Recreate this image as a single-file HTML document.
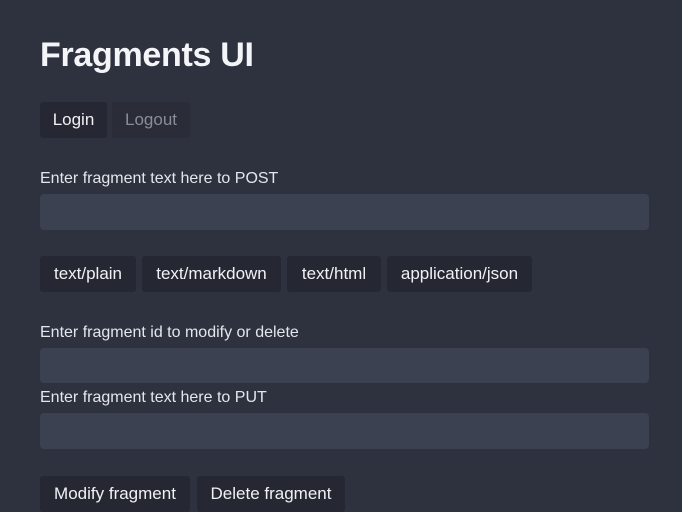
<!DOCTYPE html>
<html><head><meta charset="utf-8"><style>
html,body{margin:0;padding:0;background:#2e323f;width:682px;height:512px;overflow:hidden;font-family:"Liberation Sans",sans-serif;color:#e8e9ee}
h1{position:absolute;left:40px;top:36px;margin:0;font-size:34px;font-weight:bold;color:#f4f5f8;letter-spacing:-0.3px}
.b{position:absolute;height:36px;line-height:36px;background:#252832;border-radius:3px;font-size:17px;text-align:center;color:#f0f1f4}
.l{position:absolute;left:40px;font-size:16px;color:#e4e6ec}
.i{position:absolute;left:40px;width:609px;height:36px;background:#3c4152;border-radius:4px}
</style></head><body>
<h1>Fragments UI</h1>
<div class="b" style="left:40px;top:102px;width:67px">Login</div>
<div class="b" style="left:112px;top:102px;width:78px;color:#8a8d96;background:#2a2d37">Logout</div>
<div class="l" style="top:170px">Enter fragment text here to POST</div>
<div class="i" style="top:194px"></div>
<div class="b" style="left:40px;top:256px;width:96px">text/plain</div>
<div class="b" style="left:142px;top:256px;width:139px">text/markdown</div>
<div class="b" style="left:287px;top:256px;width:94px">text/html</div>
<div class="b" style="left:387px;top:256px;width:145px">application/json</div>
<div class="l" style="top:324px">Enter fragment id to modify or delete</div>
<div class="i" style="top:348px;height:35px"></div>
<div class="l" style="top:389px">Enter fragment text here to PUT</div>
<div class="i" style="top:413px"></div>
<div class="b" style="left:40px;top:476px;width:150px">Modify fragment</div>
<div class="b" style="left:197px;top:476px;width:148px">Delete fragment</div>
</body></html>
